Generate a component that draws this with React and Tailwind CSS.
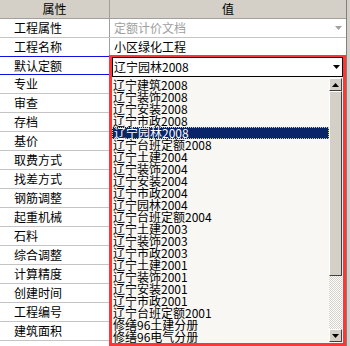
import React from "react";

const rows = [
  "工程属性",
  "工程名称",
  "默认定额",
  "专业",
  "审查",
  "存档",
  "基价",
  "取费方式",
  "找差方式",
  "钢筋调整",
  "起重机械",
  "石料",
  "综合调整",
  "计算精度",
  "创建时间",
  "工程编号",
  "建筑面积",
];

const items = [
  "辽宁建筑2008",
  "辽宁装饰2008",
  "辽宁安装2008",
  "辽宁市政2008",
  "辽宁园林2008",
  "辽宁台班定额2008",
  "辽宁土建2004",
  "辽宁装饰2004",
  "辽宁安装2004",
  "辽宁市政2004",
  "辽宁园林2004",
  "辽宁台班定额2004",
  "辽宁土建2003",
  "辽宁装饰2003",
  "辽宁市政2003",
  "辽宁土建2001",
  "辽宁装饰2001",
  "辽宁安装2001",
  "辽宁市政2001",
  "辽宁台班定额2001",
  "修缮96土建分册",
  "修缮96电气分册",
];

const SELECTED = 4;

// small down triangle used by the combo cells
const Caret = ({ color = "#000" }) => (
  <svg width="7" height="4" viewBox="0 0 7 4">
    <path d="M0 0h7L3.5 4z" fill={color} />
  </svg>
);

const ScrollButton = ({ up }) => (
  <div className="h-[13px] w-[13px] flex items-center justify-center bg-[#d4d0c8] border border-t-white border-l-white border-b-[#404040] border-r-[#404040]">
    <svg width="7" height="4" viewBox="0 0 7 4">
      <path d={up ? "M0 4h7L3.5 0z" : "M0 0h7L3.5 4z"} fill="#000" />
    </svg>
  </div>
);

const Dropdown = () => (
  <div className="absolute left-[109px] top-[55px] w-[237px] h-[291px] border-[3px] border-t-2 border-[#ff3636] flex flex-col bg-[#f8f7f3]">
    {/* combo box */}
    <div className="h-[20px] flex items-center justify-between bg-white border border-black pl-[1px] pr-[2px]">
      <span className="text-[12px] leading-[12px] text-black">辽宁园林2008</span>
      <Caret />
    </div>
    {/* list */}
    <div className="flex-1 flex min-h-0 pt-[1px]">
      <div className="flex-1 flex flex-col pl-[1px] pt-[1px]">
        {items.map((t, i) => (
          <div
            key={t}
            className={
              i === SELECTED
                ? "h-[12px] leading-[10px] text-[12px] bg-[#0a246a] text-white border border-dotted border-[#d8d09a] -ml-[1px] pl-[1px]"
                : "h-[12px] leading-[12px] text-[12px] text-black whitespace-nowrap"
            }
          >
            {t}
          </div>
        ))}
      </div>
      <div className="w-[13px] flex flex-col mr-[1px] mb-[1px]">
        <ScrollButton up />
        <div className="h-[185px] bg-[#d4d0c8] border border-t-white border-l-white border-b-[#404040] border-r-[#404040]" />
        <div className="flex-1 bg-[repeating-conic-gradient(#d4d0c8_0_25%,#ffffff_0_50%)] bg-[length:2px_2px]" />
        <ScrollButton />
      </div>
    </div>
  </div>
);

export default function App() {
  return (
    <div
      className="relative w-[350px] h-[346px] overflow-hidden bg-[#d4d0c8] flex"
      style={{ fontFamily: '"Noto Sans CJK SC", "Liberation Sans", sans-serif' }}
    >
      <div className="w-[347px] h-full bg-white border-r border-[#808080] flex flex-col">
        <div className="h-[19px] flex bg-[#d4d0c8] border-b border-[#a0a0a0] text-[12px] text-black">
          <div className="w-[110px] border-r border-[#a0a0a0] flex items-center justify-center">属性</div>
          <div className="flex-1 flex items-center justify-center">值</div>
        </div>
        {rows.map((r, i) => (
          <div
            key={r}
            className={
              i === 2
                ? "h-[19px] flex -mt-[1px] border-y border-[#1010e0]"
                : "h-[19px] flex border-b border-[#c4c4c4]"
            }
          >
            <div className="w-[110px] border-r border-[#a0a0a0] pl-[14px] flex items-center text-[12px] text-black">
              {r}
            </div>
            <div className="flex-1 flex items-center justify-between pl-[4px] pr-[4px] text-[12px]">
              {i === 0 && (
                <>
                  <span className="text-[#a0a0a0]">定额计价文档</span>
                  <Caret color="#a0a0a0" />
                </>
              )}
              {i === 1 && <span className="text-black">小区绿化工程</span>}
            </div>
          </div>
        ))}
      </div>
      <Dropdown />
    </div>
  );
}
